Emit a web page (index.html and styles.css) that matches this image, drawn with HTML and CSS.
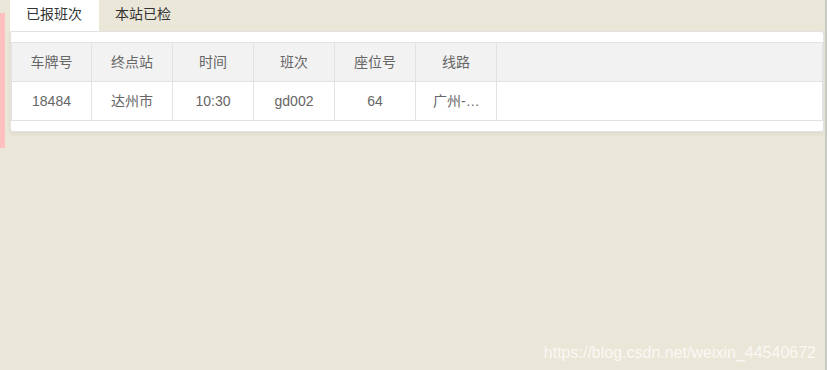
FILE: index.html
```html
<!DOCTYPE html>
<html lang="zh-CN">
<head>
<meta charset="utf-8">
<title>已报班次</title>
<link rel="stylesheet" href="styles.css">
</head>
<body>
<div class="page">
  <div class="marker"></div>
  <div class="main">
    <ul class="tabs">
      <li class="tab active">已报班次</li>
      <li class="tab">本站已检</li>
    </ul>
    <div class="panel">
      <table class="grid">
        <colgroup>
          <col class="c-first">
          <col class="c">
          <col class="c">
          <col class="c">
          <col class="c">
          <col class="c">
          <col>
        </colgroup>
        <thead>
          <tr>
            <th>车牌号</th>
            <th>终点站</th>
            <th>时间</th>
            <th>班次</th>
            <th>座位号</th>
            <th>线路</th>
            <th></th>
          </tr>
        </thead>
        <tbody>
          <tr>
            <td>18484</td>
            <td>达州市</td>
            <td>10:30</td>
            <td>gd002</td>
            <td>64</td>
            <td class="clip">广州-达州</td>
            <td></td>
          </tr>
        </tbody>
      </table>
    </div>
  </div>
  <div class="watermark">https://blog.csdn.net/weixin_44540672</div>
</div>
</body>
</html>
```

FILE: styles.css
```css
html, body {
  margin: 0;
  padding: 0;
}

body {
  background: #ebe7d8;
  font-family: "Liberation Sans", "Noto Sans CJK SC", sans-serif;
  font-size: 14px;
  color: #666;
}

.page {
  position: relative;
  display: flex;
  align-items: flex-start;
  width: 827px;
  height: 370px;
  box-sizing: border-box;
  border-right: 2px solid #c9c9c6;
  overflow: hidden;
}

.marker {
  flex: none;
  width: 5px;
  height: 135px;
  margin-top: 13px;
  background: #ffbfbf;
}

.main {
  flex: 1;
  margin-left: 5px;
  margin-right: 1px;
  min-width: 0;
}

/* tab strip */
.tabs {
  display: flex;
  margin: 0;
  padding: 0;
  list-style: none;
  height: 31px;
}

.tab {
  padding: 0 17px 0 16px;
  line-height: 29px;
  color: #333;
  white-space: nowrap;
}

.tab.active {
  background: #fff;
}

/* card body */
.panel {
  background: #fff;
  border: 1px solid #e2e2e2;
  border-radius: 0 3px 3px 3px;
  padding: 10px 0;
  box-shadow: 0 2px 4px rgba(0, 0, 0, 0.06);
}

.grid {
  width: 100%;
  border-collapse: collapse;
  table-layout: fixed;
  border: 1px solid #e2e2e2;
}

.grid col.c-first {
  width: 80px;
}

.grid col.c {
  width: 81px;
}

.grid th,
.grid td {
  border: 1px solid #e2e2e2;
  padding: 9px 15px;
  line-height: 20px;
  text-align: center;
  font-weight: normal;
  color: #666;
}

.grid thead tr {
  background: #f2f2f2;
}

.grid .clip {
  white-space: nowrap;
  overflow: hidden;
  text-overflow: ellipsis;
  text-align: left;
  padding-left: 17px;
}

.watermark {
  position: absolute;
  right: 9px;
  bottom: 8px;
  font-size: 16px;
  line-height: 19px;
  color: rgba(255, 255, 255, 0.72);
  white-space: nowrap;
}
```
